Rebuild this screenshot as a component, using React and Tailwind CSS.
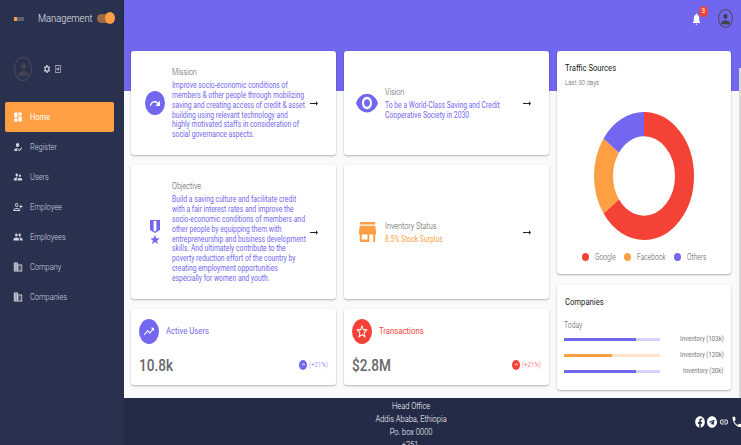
import React from "react";
import { MdDashboard, MdHowToReg, MdSupervisorAccount, MdPersonAddAlt, MdPeople, MdDomain, MdBusiness, MdSettings, MdExitToApp, MdRedo, MdVisibility, MdStore, MdArrowRightAlt, MdTrendingUp, MdStarBorder, MdNotifications, MdPerson, MdLink, MdPhone, MdKeyboardArrowUp } from "react-icons/md";
import { FaFacebook, FaTelegram } from "react-icons/fa";

const nav = [
  [MdHowToReg, "Register"],
  [MdSupervisorAccount, "Users"],
  [MdPersonAddAlt, "Employee"],
  [MdPeople, "Employees"],
  [MdDomain, "Company"],
  [MdBusiness, "Companies"],
];

// The reference is horizontally condensed: every text run is narrowed to 80%.
function T({ className = "", children }) {
  return <span className={"inline-block origin-left scale-x-[0.8] whitespace-nowrap " + className}>{children}</span>;
}

const stretch = { preserveAspectRatio: "none" };

function Arrow() {
  return <MdArrowRightAlt className="h-[13px] w-[12px] shrink-0 text-[#222]" {...stretch} />;
}

function Card({ className, children }) {
  return <div className={"rounded-[3px] bg-white shadow-[0_1px_2px_rgba(0,0,0,0.3)] " + className}>{children}</div>;
}

function InfoCard({ icon, title, className, lines, bodyClass = "text-[#7367f0]" }) {
  return (
    <Card className={"flex w-[205px] items-center pl-[14px] pr-[16px] " + className}>
      <div className="flex w-[27px] shrink-0">{icon}</div>
      <div className="w-[136px] shrink-0">
        <div className="text-[9px] font-light leading-[12px] text-[#555]"><T>{title}</T></div>
        <div className={"mt-[3px] text-[8.5px] leading-[9.8px] " + bodyClass}>
          {lines.map((line) => (
            <div key={line}><T>{line}</T></div>
          ))}
        </div>
      </div>
      <Arrow />
    </Card>
  );
}

function Stat({ icon, title, value, text, bg }) {
  return (
    <Card className="flex h-[76px] w-[205px] flex-col pl-2 pr-[9px] pt-[10px]">
      <div className="flex items-center gap-[7px]">
        <div className={"flex h-[25px] w-5 items-center justify-center rounded-[50%] text-white " + bg}>{icon}</div>
        <span className={"text-[9.7px] " + text}><T>{title}</T></span>
      </div>
      <div className="mt-[11px] flex h-5 items-center justify-between">
        <span className="text-[17px] font-medium leading-5 text-[#666]"><T>{value}</T></span>
        <div className="flex items-center gap-[2px]">
          <span className={"flex h-[10px] w-[8px] items-center justify-center rounded-[50%] text-white " + bg}><MdKeyboardArrowUp className="text-[7px]" /></span>
          <span className={"w-[18px] text-[7.7px] font-light " + text}><T>(+21%)</T></span>
        </div>
      </div>
    </Card>
  );
}

function Bar({ label, pct, solid, light, w }) {
  return (
    <div className="flex h-4 items-center justify-between">
      <div className={"h-[3px] w-[96px] " + light}>
        <div className={"h-full " + solid} style={{ width: pct + "%" }} />
      </div>
      <div className={"text-[7.6px] text-[#777] " + w}><T>{label}</T></div>
    </div>
  );
}

function Legend({ color, label, w }) {
  return (
    <div className="flex items-center gap-[6px]">
      <span className={"h-[8px] w-[7px] rounded-[50%] " + color} />
      <span className={"text-[8.4px] font-light leading-[10px] text-[#555] " + w}><T>{label}</T></span>
    </div>
  );
}

function Medal() {
  return (
    <svg viewBox="0 0 10 25" className="ml-[5px] h-[25px] w-[10px] text-[#7367f0]" fill="currentColor">
      <path d="M0 0h10v10l-5 3-5-3z" />
      <path d="M3.6 1h2.8v9.6l-1.4.8-1.4-.8z" fill="#fff" />
      <path d="M5 15l1.3 3.2 3.5.2-2.7 2.2.9 3.4L5 22.1 2 24l.9-3.4L.2 18.4l3.5-.2z" />
    </svg>
  );
}

export default function App() {
  return (
    <div className="flex h-screen w-full overflow-hidden bg-[#fafafa] font-['Roboto',sans-serif]">
      <aside className="w-[124px] shrink-0 bg-[#29314f]">
        <div className="flex h-[37px] items-center pl-[14px]">
          <div className="h-[4px] w-[10px] bg-[linear-gradient(90deg,#ff9f43_35%,#5d6070_35%)]" />
          <span className="ml-[14px] w-[56px] text-[11.7px] font-light text-[#e8e8ee]"><T>Management</T></span>
          <div className="relative ml-[3px] h-[9px] w-[14px] rounded-full bg-[#9c6a45]">
            <span className="absolute right-[-4px] top-[-2px] h-[12px] w-[10px] rounded-[50%] bg-[#ff9f43]" />
          </div>
        </div>
        <div className="mt-[20px] flex items-center pl-[14px]">
          <div className="flex h-[24px] w-[18px] items-center justify-center rounded-[50%] border border-[#4a4a5a]">
            <MdPerson className="h-[19px] w-[15px] text-[#45434f]" {...stretch} />
          </div>
          <MdSettings className="ml-[11px] h-[10px] w-[8px] text-[#bfc2cc]" {...stretch} />
          <MdExitToApp className="ml-[3px] h-[10px] w-[8px] text-[#bfc2cc]" {...stretch} />
        </div>
        <nav className="mt-[21px] flex flex-col">
          <div className="ml-[5px] mr-[10px] flex h-[30px] items-center rounded-[2px] bg-[#ff9f43] pl-[8px] text-white">
            <MdDashboard className="h-[12px] w-[10px]" {...stretch} />
            <span className="ml-[7px] text-[9.3px]"><T>Home</T></span>
          </div>
          {nav.map(([Icon, label]) => (
            <div key={label} className="ml-[5px] mr-[10px] flex h-[30px] items-center pl-[8px] text-[#d5d7e0]">
              <Icon className="h-[12px] w-[10px]" {...stretch} />
              <span className="ml-[7px] text-[9.3px] font-light"><T>{label}</T></span>
            </div>
          ))}
        </nav>
      </aside>

      <div className="flex min-w-0 flex-1 flex-col">
        <header className="flex h-[37px] shrink-0 items-center justify-end bg-[#7166ee] pr-[8px] shadow-[0_1px_2px_rgba(0,0,0,0.35)]">
          <div className="relative mr-[16px] flex">
            <MdNotifications className="h-[14px] w-[11px] text-white" {...stretch} />
            <span className="absolute right-[-6px] top-[-6px] flex h-[11px] w-[9px] items-center justify-center rounded-[50%] bg-[#f44336] text-[8px] text-white"><span className="scale-x-[0.8]">3</span></span>
          </div>
          <div className="flex h-[19px] w-[15px] items-center justify-center rounded-[50%] border border-[#4a4a5a]">
            <MdPerson className="h-[16px] w-[13px] text-[#45434f]" {...stretch} />
          </div>
        </header>

        <main className="relative flex-1 bg-[linear-gradient(#7166ee_54px,#fafafa_54px)] pl-[7px] pt-[14px]">
          <div className="flex gap-2">
            <div className="flex w-[418px] flex-col gap-[10px]">
              <div className="flex gap-2">
                <InfoCard className="h-[104px]" title="Mission"
                  icon={<div className="flex h-[24px] w-[20px] items-center justify-center rounded-[50%] bg-[#7367f0] text-white"><MdRedo className="h-[15px] w-[12px]" {...stretch} /></div>}
                  lines={[
                    "Improve socio-economic conditions of",
                    "members & other people through mobilizing",
                    "saving and creating access of credit & asset",
                    "building using relevant technology and",
                    "highly motivated staffs in consideration of",
                    "social governance aspects.",
                  ]} />
                <InfoCard className="h-[104px]" title="Vision"
                  icon={<MdVisibility className="ml-[-3px] h-[30px] w-[24px] text-[#7367f0]" {...stretch} />}
                  lines={["To be a World-Class Saving and Credit", "Cooperative Society in 2030"]} />
              </div>
              <div className="flex gap-2">
                <InfoCard className="h-[134px]" title="Objective"
                  icon={<Medal />}
                  lines={[
                    "Build a saving culture and facilitate credit",
                    "with a fair interest rates and improve the",
                    "socio-economic conditions of members and",
                    "other people by equipping them with",
                    "entrepreneurship and business development",
                    "skills. And ultimately contribute to the",
                    "poverty reduction effort of the country by",
                    "creating employment opportunities",
                    "especially for women and youth.",
                  ]} />
                <InfoCard className="h-[134px]" title="Inventory Status"
                  icon={<MdStore className="ml-[-2px] h-[30px] w-[23px] text-[#ff9f43]" {...stretch} />}
                  bodyClass="text-[#ff9f43]"
                  lines={["8.5% Stock Surplus"]} />
              </div>
              <div className="flex gap-2">
                <Stat title="Active Users" value="10.8k" text="text-[#7367f0]" bg="bg-[#7367f0]"
                  icon={<MdTrendingUp className="h-[15px] w-[12px]" {...stretch} />} />
                <Stat title="Transactions" value="$2.8M" text="text-[#f44336]" bg="bg-[#f44336]"
                  icon={<MdStarBorder className="h-[17px] w-[14px]" {...stretch} />} />
              </div>
            </div>

            <div className="flex w-[174px] flex-col gap-[11px]">
              <Card className="h-[223px] px-2 pt-[11px]">
                <div className="text-[9.6px] leading-[12px] text-[#222]"><T>Traffic Sources</T></div>
                <div className="mt-[4px] text-[7.7px] font-light leading-[10px] text-[#555]"><T>Last 30 days</T></div>
                <svg viewBox="0 0 100 100" preserveAspectRatio="none" className="mx-auto mt-[24px] h-[128px] w-[100px]">
                  <g transform="rotate(-90 50 50)">
                    <circle cx="50" cy="50" r="40.5" fill="none" stroke="#f44336" strokeWidth="19" pathLength="100" strokeDasharray="65 100" />
                    <circle cx="50" cy="50" r="40.5" fill="none" stroke="#ff9f43" strokeWidth="19" pathLength="100" strokeDasharray="20 100" strokeDashoffset="-65" />
                    <circle cx="50" cy="50" r="40.5" fill="none" stroke="#7367f0" strokeWidth="19" pathLength="100" strokeDasharray="15 100" strokeDashoffset="-85" />
                  </g>
                </svg>
                <div className="mt-[12px] flex justify-center gap-[10px]">
                  <Legend color="bg-[#f44336]" label="Google" w="w-[19px]" />
                  <Legend color="bg-[#ff9f43]" label="Facebook" w="w-[27px]" />
                  <Legend color="bg-[#7367f0]" label="Others" w="w-[19px]" />
                </div>
              </Card>
              <Card className="h-[105px] pl-[7px] pr-2 pt-[11px]">
                <div className="pl-px text-[9.6px] leading-[12px] text-[#222]"><T>Companies</T></div>
                <div className="mb-[1px] mt-[12px] text-[8.6px] font-light leading-[10px] text-[#555]"><T>Today</T></div>
                <Bar label="Inventory (103k)" pct={75} solid="bg-[#7367f0]" light="bg-[#d6d2fb]" w="w-[43px]" />
                <Bar label="Inventory (120k)" pct={50} solid="bg-[#ff9f43]" light="bg-[#ffe3c9]" w="w-[43px]" />
                <Bar label="Inventory (30k)" pct={75} solid="bg-[#7367f0]" light="bg-[#d6d2fb]" w="w-[40px]" />
              </Card>
            </div>
          </div>
          <div className="absolute bottom-0 right-0 top-[31px] w-[2px] bg-[#d8d8d8]" />
        </main>

        <footer className="flex h-[47px] shrink-0 overflow-hidden bg-[#232b47] text-white">
          <div className="flex-1 scale-x-[0.8] pl-[4px] pt-[1px] text-center text-[9.4px] font-light leading-[13px]">
            <div>Head Office</div>
            <div>Addis Ababa, Ethiopia</div>
            <div>Po. box 0000</div>
            <div>+251-</div>
          </div>
          <div className="flex w-[46px] shrink-0 items-center gap-[2px]">
            <FaFacebook className="h-[12px] w-[10px] shrink-0" {...stretch} />
            <FaTelegram className="h-[12px] w-[10px] shrink-0" {...stretch} />
            <MdLink className="h-[12px] w-[10px] shrink-0" {...stretch} />
            <MdPhone className="h-[14px] w-[12px] shrink-0" {...stretch} />
          </div>
        </footer>
      </div>
    </div>
  );
}
